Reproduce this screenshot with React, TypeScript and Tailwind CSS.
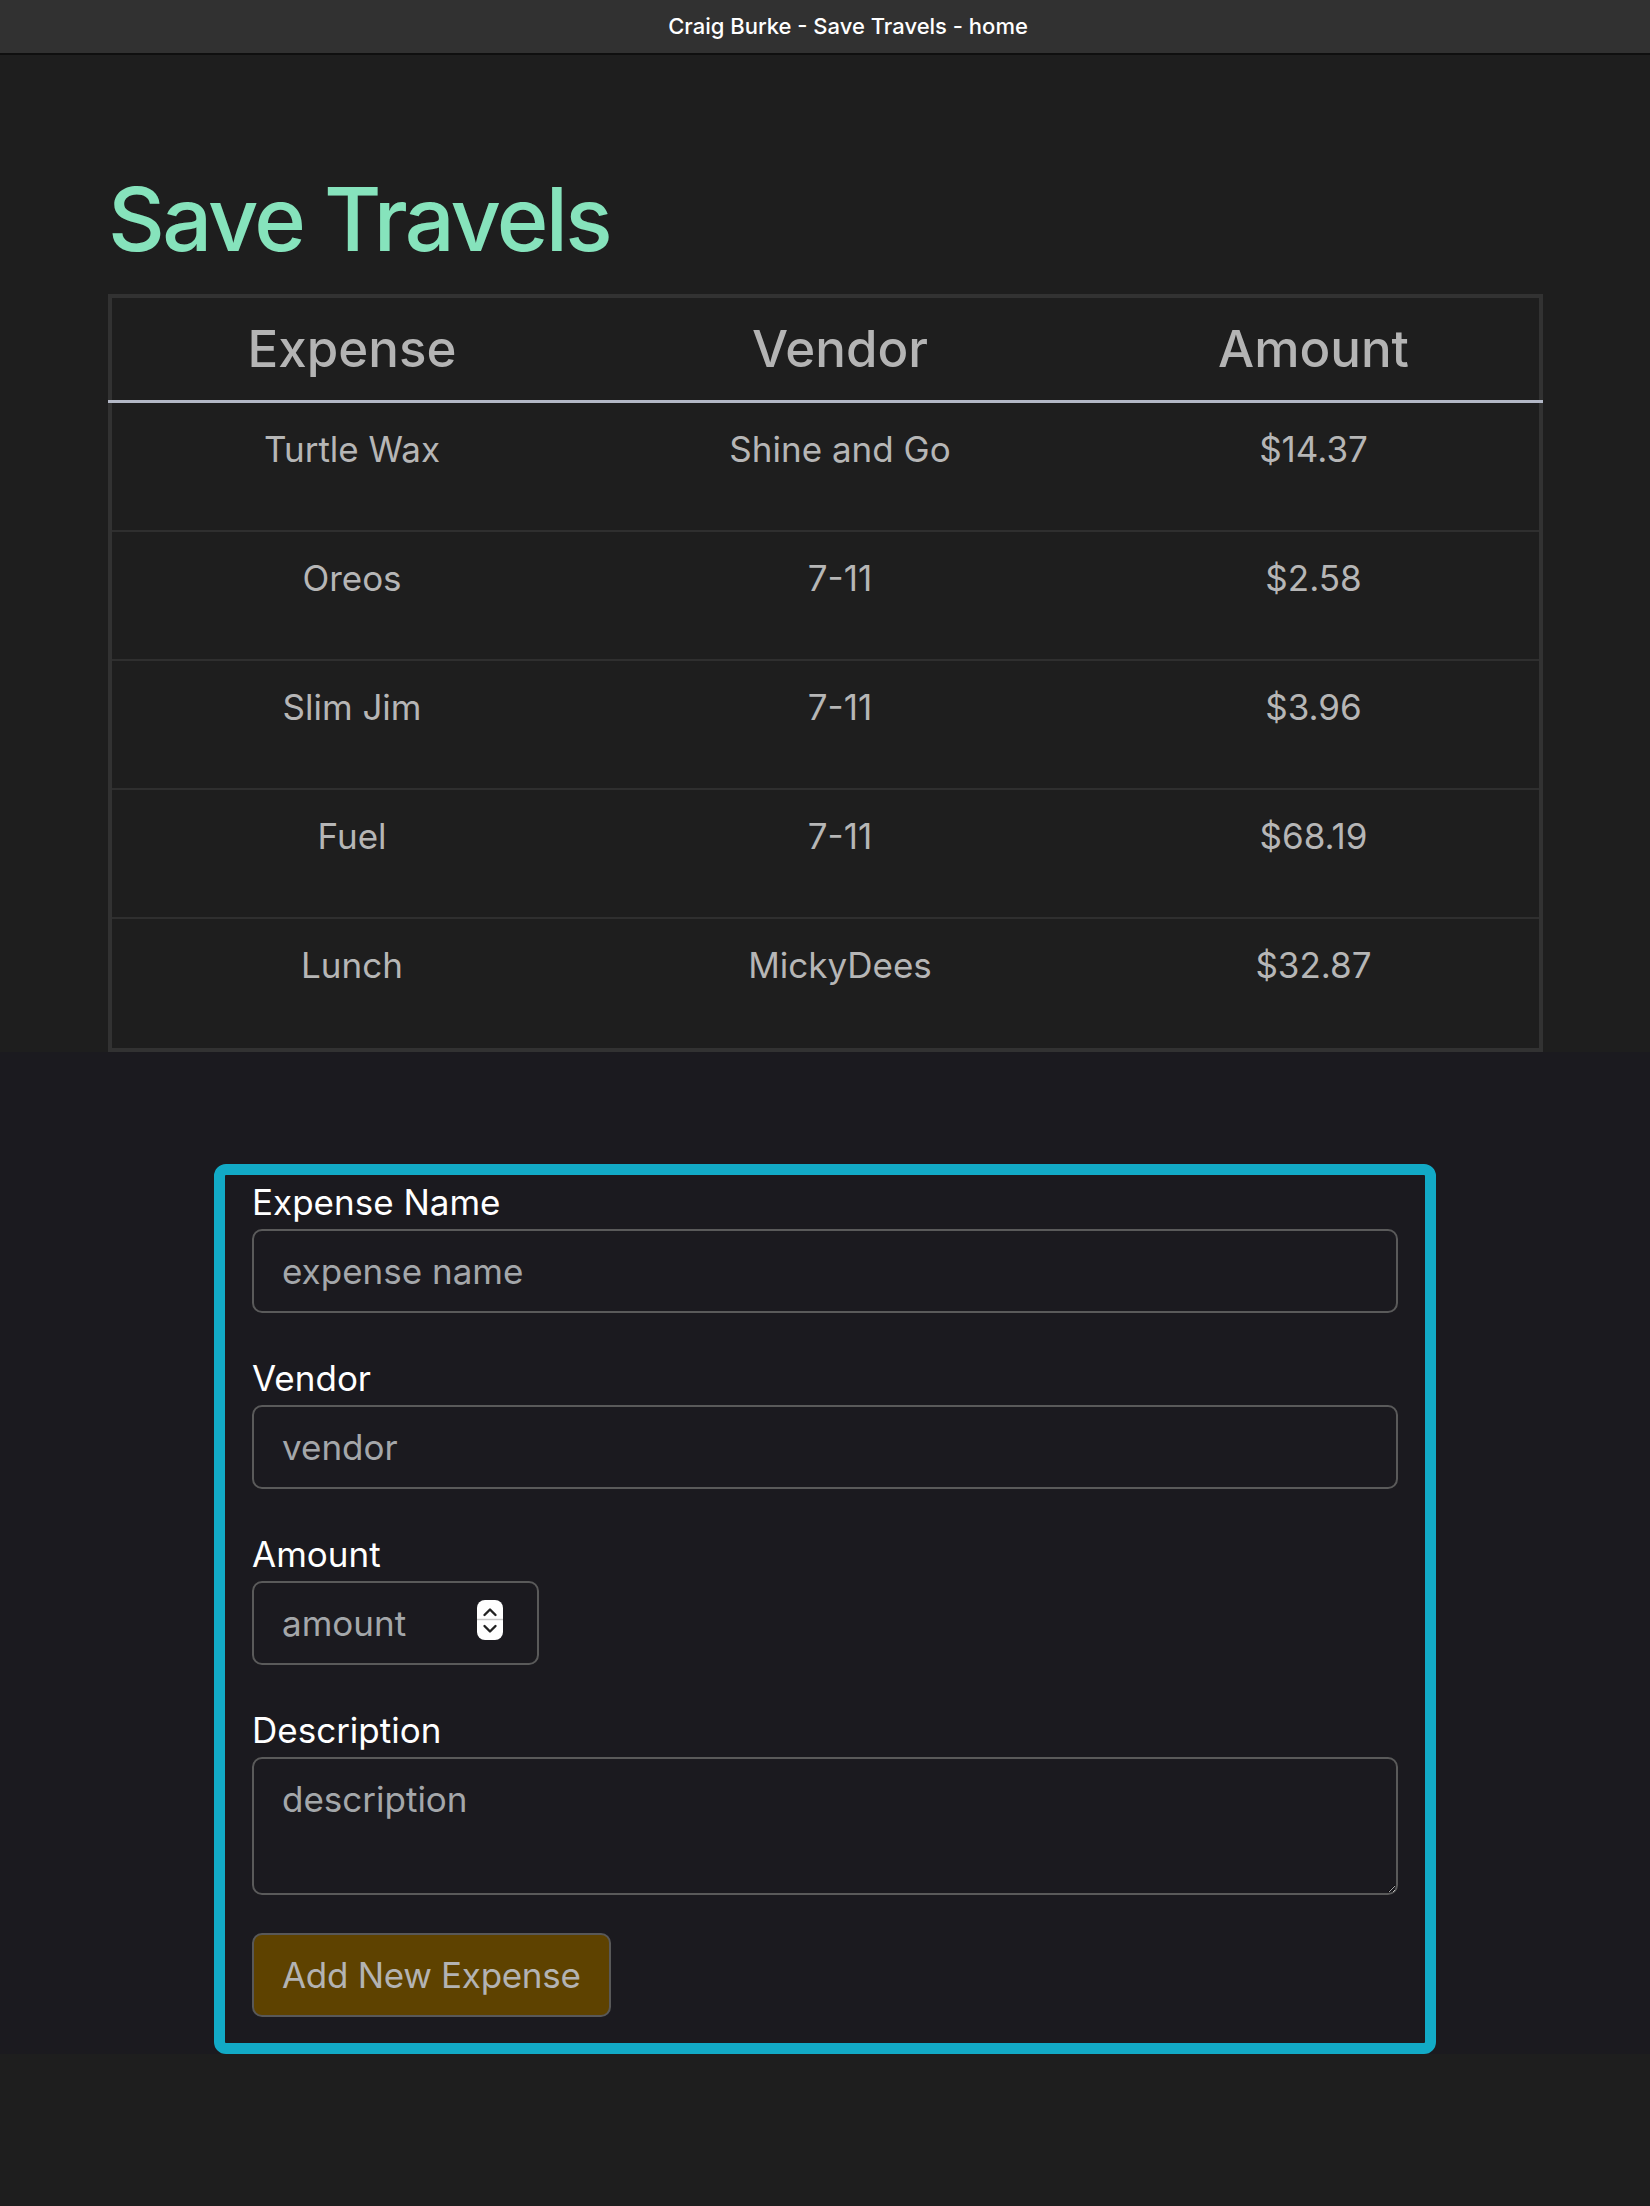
import { useState } from "react";

const expenses = [
  { name: "Turtle Wax", vendor: "Shine and Go", amount: "$14.37" },
  { name: "Oreos", vendor: "7-11", amount: "$2.58" },
  { name: "Slim Jim", vendor: "7-11", amount: "$3.96" },
  { name: "Fuel", vendor: "7-11", amount: "$68.19" },
  { name: "Lunch", vendor: "MickyDees", amount: "$32.87" },
];

function Spinner() {
  return (
    <svg width="26" height="40" viewBox="0 0 26 40" className="-mt-[6px] shrink-0">
      <rect x="0" y="0" width="26" height="40" rx="8" fill="#ffffff" />
      <line x1="0" y1="19.5" x2="26" y2="19.5" stroke="#c8c8c8" strokeWidth="1.5" />
      <path d="M7.5 15 L13 9.5 L18.5 15" fill="none" stroke="#222" strokeWidth="2.4" strokeLinecap="round" strokeLinejoin="round" />
      <path d="M7.5 26 L13 31.5 L18.5 26" fill="none" stroke="#222" strokeWidth="2.4" strokeLinecap="round" strokeLinejoin="round" />
    </svg>
  );
}

export default function App() {
  const [form, setForm] = useState({ name: "", vendor: "", amount: "", description: "" });

  const inputClass =
    "block w-full h-[84px] bg-transparent border-2 border-[#5a5a5a] rounded-[10px] px-[28px] text-[35px] text-[#dddddd] placeholder:text-[#a4a7aa] outline-none";

  return (
    <div className="min-h-screen bg-[#1e1e1e] font-['Inter',sans-serif]">
      {/* Window title bar */}
      <div className="h-[55px] bg-[#313131] border-b-2 border-[#0f0f0f] flex items-center justify-center pl-[46px] text-[22px] font-medium text-white">
        Craig Burke - Save Travels - home
      </div>

      {/* Expense table */}
      <div className="px-[108px] pt-[110px]">
        <h1 className="h-[108px] leading-[108px] mb-[21px] text-[88px] font-medium tracking-[-2.7px] text-[#86e3bc]">
          Save Travels
        </h1>

        <div className="w-[1435px]">
          <div className="h-[106px] border-4 border-b-0 border-[#323232] grid grid-cols-[480px_496px_1fr] text-[51px] font-medium text-[#b4b4b4]">
            <div className="flex items-center justify-center">Expense</div>
            <div className="flex items-center justify-center">Vendor</div>
            <div className="flex items-center justify-center">Amount</div>
          </div>
          <div className="h-[3px] bg-[#b3b8c6]" />
          <div className="border-4 border-t-0 border-[#323232]">
            {expenses.map((e, i) => (
              <div
                key={e.name}
                className={`h-[129px] grid grid-cols-[480px_496px_1fr] pt-[20px] text-[35px] leading-[52px] text-[#b6b6b6] text-center ${
                  i < expenses.length - 1 ? "border-b-2 border-[#2f2f2f]" : ""
                }`}
              >
                <div>{e.name}</div>
                <div>{e.vendor}</div>
                <div>{e.amount}</div>
              </div>
            ))}
          </div>
        </div>
      </div>

      {/* New expense form */}
      <div className="bg-[#1b1a1f] pt-[112px]">
        <form
          onSubmit={(ev) => ev.preventDefault()}
          className="mx-auto w-[1222px] border-[11px] border-[#12aac6] rounded-[12px] px-[27px] pb-[26px]"
        >
          <label className="block text-[35px] leading-[54px] text-white">Expense Name</label>
          <input
            className={`${inputClass} mb-[38px]`}
            placeholder="expense name"
            value={form.name}
            onChange={(ev) => setForm({ ...form, name: ev.target.value })}
          />

          <label className="block text-[35px] leading-[54px] text-white">Vendor</label>
          <input
            className={`${inputClass} mb-[38px]`}
            placeholder="vendor"
            value={form.vendor}
            onChange={(ev) => setForm({ ...form, vendor: ev.target.value })}
          />

          <label className="block text-[35px] leading-[54px] text-white">Amount</label>
          <div className="w-[287px] h-[84px] mb-[38px] border-2 border-[#5a5a5a] rounded-[10px] flex items-center pl-[28px] pr-[34px]">
            <input
              className="flex-1 min-w-0 bg-transparent text-[35px] text-[#dddddd] placeholder:text-[#a4a7aa] outline-none"
              placeholder="amount"
              inputMode="decimal"
              value={form.amount}
              onChange={(ev) => setForm({ ...form, amount: ev.target.value })}
            />
            <Spinner />
          </div>

          <label className="block text-[35px] leading-[54px] text-white">Description</label>
          <textarea
            className="block w-full h-[138px] mb-[38px] bg-transparent border-2 border-[#5a5a5a] rounded-[10px] px-[28px] pt-[14px] text-[35px] leading-[52px] text-[#dddddd] placeholder:text-[#a4a7aa] outline-none"
            placeholder="description"
            value={form.description}
            onChange={(ev) => setForm({ ...form, description: ev.target.value })}
          />

          <button
            type="submit"
            className="h-[84px] px-[28px] bg-[#5e4200] border-2 border-[#585858] rounded-[10px] text-[35px] tracking-[-0.3px] text-[#b3b3b3]"
          >
            Add New Expense
          </button>
        </form>
      </div>
    </div>
  );
}
